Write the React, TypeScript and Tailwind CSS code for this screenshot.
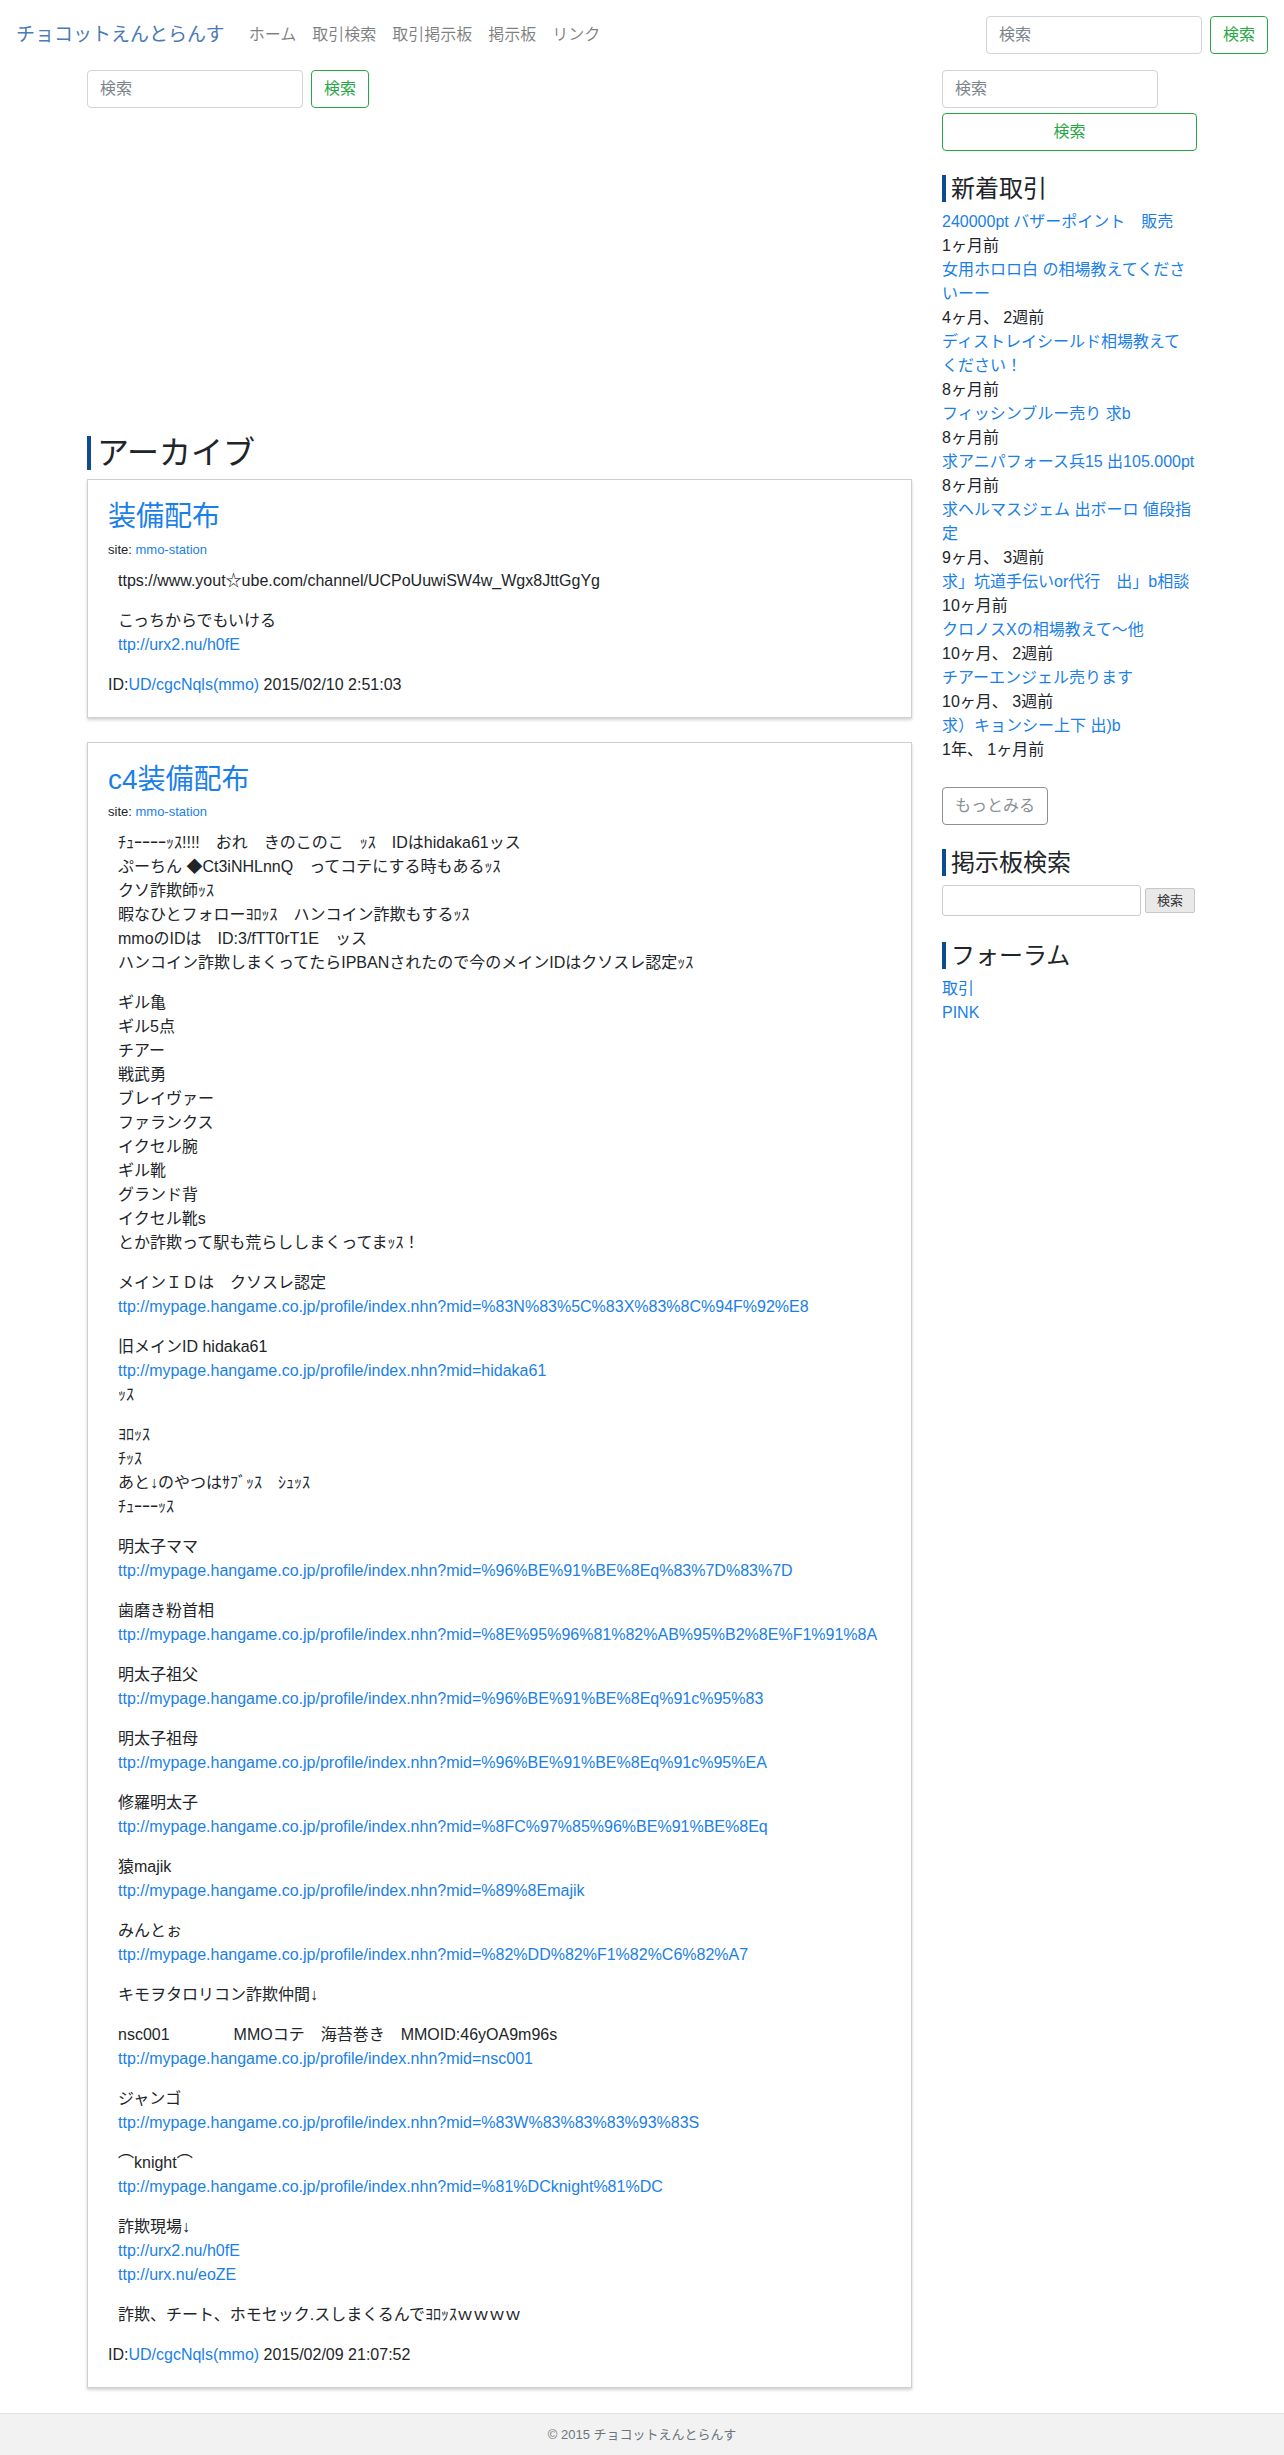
import React from "react";

type Line = string | { link: string };

const post1: Line[][] = [
  ["ttps://www.yout☆ube.com/channel/UCPoUuwiSW4w_Wgx8JttGgYg"],
  ["こっちからでもいける", { link: "ttp://urx2.nu/h0fE" }],
];

const H = "ttp://mypage.hangame.co.jp/profile/index.nhn?mid=";

const post2: Line[][] = [
  [
    "ﾁｭｰｰｰｰｯｽ!!!!　おれ　きのこのこ　ｯｽ　IDはhidaka61ッス",
    "ぷーちん ◆Ct3iNHLnnQ　ってコテにする時もあるｯｽ",
    "クソ詐欺師ｯｽ",
    "暇なひとフォローﾖﾛｯｽ　ハンコイン詐欺もするｯｽ",
    "mmoのIDは　ID:3/fTT0rT1E　ッス",
    "ハンコイン詐欺しまくってたらIPBANされたので今のメインIDはクソスレ認定ｯｽ",
  ],
  [
    "ギル亀",
    "ギル5点",
    "チアー",
    "戦武勇",
    "ブレイヴァー",
    "ファランクス",
    "イクセル腕",
    "ギル靴",
    "グランド背",
    "イクセル靴s",
    "とか詐欺って駅も荒らししまくってまｯｽ！",
  ],
  ["メインＩＤは　クソスレ認定", { link: H + "%83N%83%5C%83X%83%8C%94F%92%E8" }],
  ["旧メインID hidaka61", { link: H + "hidaka61" }, "ｯｽ"],
  ["ﾖﾛｯｽ", "ﾁｯｽ", "あと↓のやつはｻﾌﾞｯｽ　ｼｭｯｽ", "ﾁｭｰｰｰｯｽ"],
  ["明太子ママ", { link: H + "%96%BE%91%BE%8Eq%83%7D%83%7D" }],
  ["歯磨き粉首相", { link: H + "%8E%95%96%81%82%AB%95%B2%8E%F1%91%8A" }],
  ["明太子祖父", { link: H + "%96%BE%91%BE%8Eq%91c%95%83" }],
  ["明太子祖母", { link: H + "%96%BE%91%BE%8Eq%91c%95%EA" }],
  ["修羅明太子", { link: H + "%8FC%97%85%96%BE%91%BE%8Eq" }],
  ["猿majik", { link: H + "%89%8Emajik" }],
  ["みんとぉ", { link: H + "%82%DD%82%F1%82%C6%82%A7" }],
  ["キモヲタロリコン詐欺仲間↓"],
  ["nsc001　　　　MMOコテ　海苔巻き　MMOID:46yOA9m96s", { link: H + "nsc001" }],
  ["ジャンゴ", { link: H + "%83W%83%83%83%93%83S" }],
  ["⌒knight⌒", { link: H + "%81%DCknight%81%DC" }],
  ["詐欺現場↓", { link: "ttp://urx2.nu/h0fE" }, { link: "ttp://urx.nu/eoZE" }],
  ["詐欺、チート、ホモセック.スしまくるんでﾖﾛｯｽｗｗｗｗ"],
];

const trades: [string[], string][] = [
  [["240000pt バザーポイント　販売"], "1ヶ月前"],
  [["女用ホロロ白 の相場教えてくださいーー"], "4ヶ月、 2週前"],
  [["ディストレイシールド相場教えて", "ください！"], "8ヶ月前"],
  [["フィッシンブルー売り 求b"], "8ヶ月前"],
  [["求アニパフォース兵15 出105.000pt"], "8ヶ月前"],
  [["求ヘルマスジェム 出ボーロ 値段指定"], "9ヶ月、 3週前"],
  [["求」坑道手伝いor代行　出」b相談"], "10ヶ月前"],
  [["クロノスXの相場教えて～他"], "10ヶ月、 2週前"],
  [["チアーエンジェル売ります"], "10ヶ月、 3週前"],
  [["求）キョンシー上下 出)b"], "1年、 1ヶ月前"],
];

function SearchInput({ w }: { w: string }) {
  return (
    <input
      type="text"
      placeholder="検索"
      className={`${w} h-[38px] rounded-[4px] border border-[#ced4da] bg-white px-3 text-[16px] text-[#495057] placeholder:text-[#7d848b] outline-none`}
    />
  );
}

function GreenButton({ full }: { full?: boolean }) {
  return (
    <button
      type="button"
      className={`${full ? "w-full" : ""} h-[38px] rounded-[4px] border border-[#28a745] bg-white px-3 text-[16px] leading-[24px] text-[#28a745]`}
    >
      検索
    </button>
  );
}

function Post({ title, paras, id, date }: { title: string; paras: Line[][]; id: string; date: string }) {
  return (
    <div className="mb-6 border border-[#cfcfcf] bg-white shadow-[0_2px_3px_rgba(0,0,0,0.18)]">
      <div className="p-5">
        <h3 className="mb-[6px] text-[28px] leading-[1.2] text-[#1a7fe8]">
          <a href="#">{title}</a>
        </h3>
        <div className="text-[13px] leading-[19px]">
          site: <a href="#" className="text-[#1a7fe8]">mmo-station</a>
        </div>
        <div className="mt-[10px] pl-[10px]">
          {paras.map((p, i) => (
            <p key={i} className="mb-4 text-[16px] leading-[24px]">
              {p.map((l, j) => (
                <React.Fragment key={j}>
                  {j > 0 && <br />}
                  {typeof l === "string" ? (
                    l
                  ) : (
                    <a href="#" className="text-[#1a7fe8]">
                      {l.link}
                    </a>
                  )}
                </React.Fragment>
              ))}
            </p>
          ))}
        </div>
        <div className="text-[16px] leading-[24px]">
          ID:<a href="#" className="text-[#1a7fe8]">{id}</a> {date}
        </div>
      </div>
    </div>
  );
}

function SideHeading({ children }: { children: React.ReactNode }) {
  return (
    <h4 className="mb-2 border-l-4 border-[#0e4c92] pl-[5px] text-[24px] leading-[27px] text-[#212529]">
      {children}
    </h4>
  );
}

export default function App() {
  return (
    <div className="min-h-[2455px] flex flex-col bg-white font-['Liberation_Sans','Noto_Sans_CJK_JP',sans-serif] text-[#212529]">
      {/* navbar */}
      <nav className="flex h-[70px] items-center px-4">
        <a href="#" className="mr-4 text-[19px] leading-[30px] text-[#4a7ab8]">
          チョコットえんとらんす
        </a>
        <ul className="flex text-[16px] leading-[24px] text-black/50">
          {["ホーム", "取引検索", "取引掲示板", "掲示板", "リンク"].map((t) => (
            <li key={t}>
              <a href="#" className="block px-2 py-2">
                {t}
              </a>
            </li>
          ))}
        </ul>
        <form className="ml-auto flex items-center gap-2">
          <SearchInput w="w-[216px]" />
          <GreenButton />
        </form>
      </nav>

      <div className="mx-auto flex w-[1140px] flex-1">
        {/* main column */}
        <main className="w-[855px] px-[15px]">
          <form className="flex items-center gap-2">
            <SearchInput w="w-[216px]" />
            <GreenButton />
          </form>
          <div className="h-[328px]" />
          <h2 className="mb-[9px] border-l-4 border-[#0e4c92] pl-[6px] text-[32px] leading-[34px]">
            アーカイブ
          </h2>
          <Post title="装備配布" paras={post1} id="UD/cgcNqls(mmo)" date="2015/02/10 2:51:03" />
          <Post title="c4装備配布" paras={post2} id="UD/cgcNqls(mmo)" date="2015/02/09 21:07:52" />
        </main>

        {/* sidebar */}
        <aside className="w-[285px] px-[15px]">
          <div className="mb-6">
            <SearchInput w="w-[216px]" />
            <div className="mt-[5px]">
              <GreenButton full />
            </div>
          </div>

          <SideHeading>新着取引</SideHeading>
          <div className="text-[16px] leading-[24px]">
            {trades.map(([t, d]) => (
              <div key={t.join("")}>
                <a href="#" className="block text-[#1a7fe8]">
                  {t.map((s, k) => (
                    <React.Fragment key={k}>
                      {k > 0 && <br />}
                      {s}
                    </React.Fragment>
                  ))}
                </a>
                <div>{d}</div>
              </div>
            ))}
          </div>
          <button
            type="button"
            className="mt-[25px] mb-6 h-[38px] rounded-[4px] border border-[#8a9096] bg-white px-3 text-[16px] text-[#8a9096]"
          >
            もっとみる
          </button>

          <SideHeading>掲示板検索</SideHeading>
          <form className="mb-[26px] mt-[9px] flex items-center gap-1">
            <input
              type="text"
              className="h-[31px] w-[199px] rounded-[3px] border border-[#cccccc] bg-white px-2 text-[14px] outline-none"
            />
            <button
              type="button"
              className="h-[25px] w-[50px] rounded-[2px] border border-[#c8c8c8] bg-[#e9e9e9] text-[13px] leading-[23px] text-[#333]"
            >
              検索
            </button>
          </form>

          <SideHeading>フォーラム</SideHeading>
          <div className="text-[16px] leading-[24px]">
            <a href="#" className="block text-[#1a7fe8]">
              取引
            </a>
            <a href="#" className="block text-[#1a7fe8]">
              PINK
            </a>
          </div>
        </aside>
      </div>

      <footer className="flex h-[42px] items-center justify-center border-t border-[#e3e3e3] bg-[#f2f2f2] text-[13px] text-[#6c757d]">
        © 2015 チョコットえんとらんす
      </footer>
    </div>
  );
}
